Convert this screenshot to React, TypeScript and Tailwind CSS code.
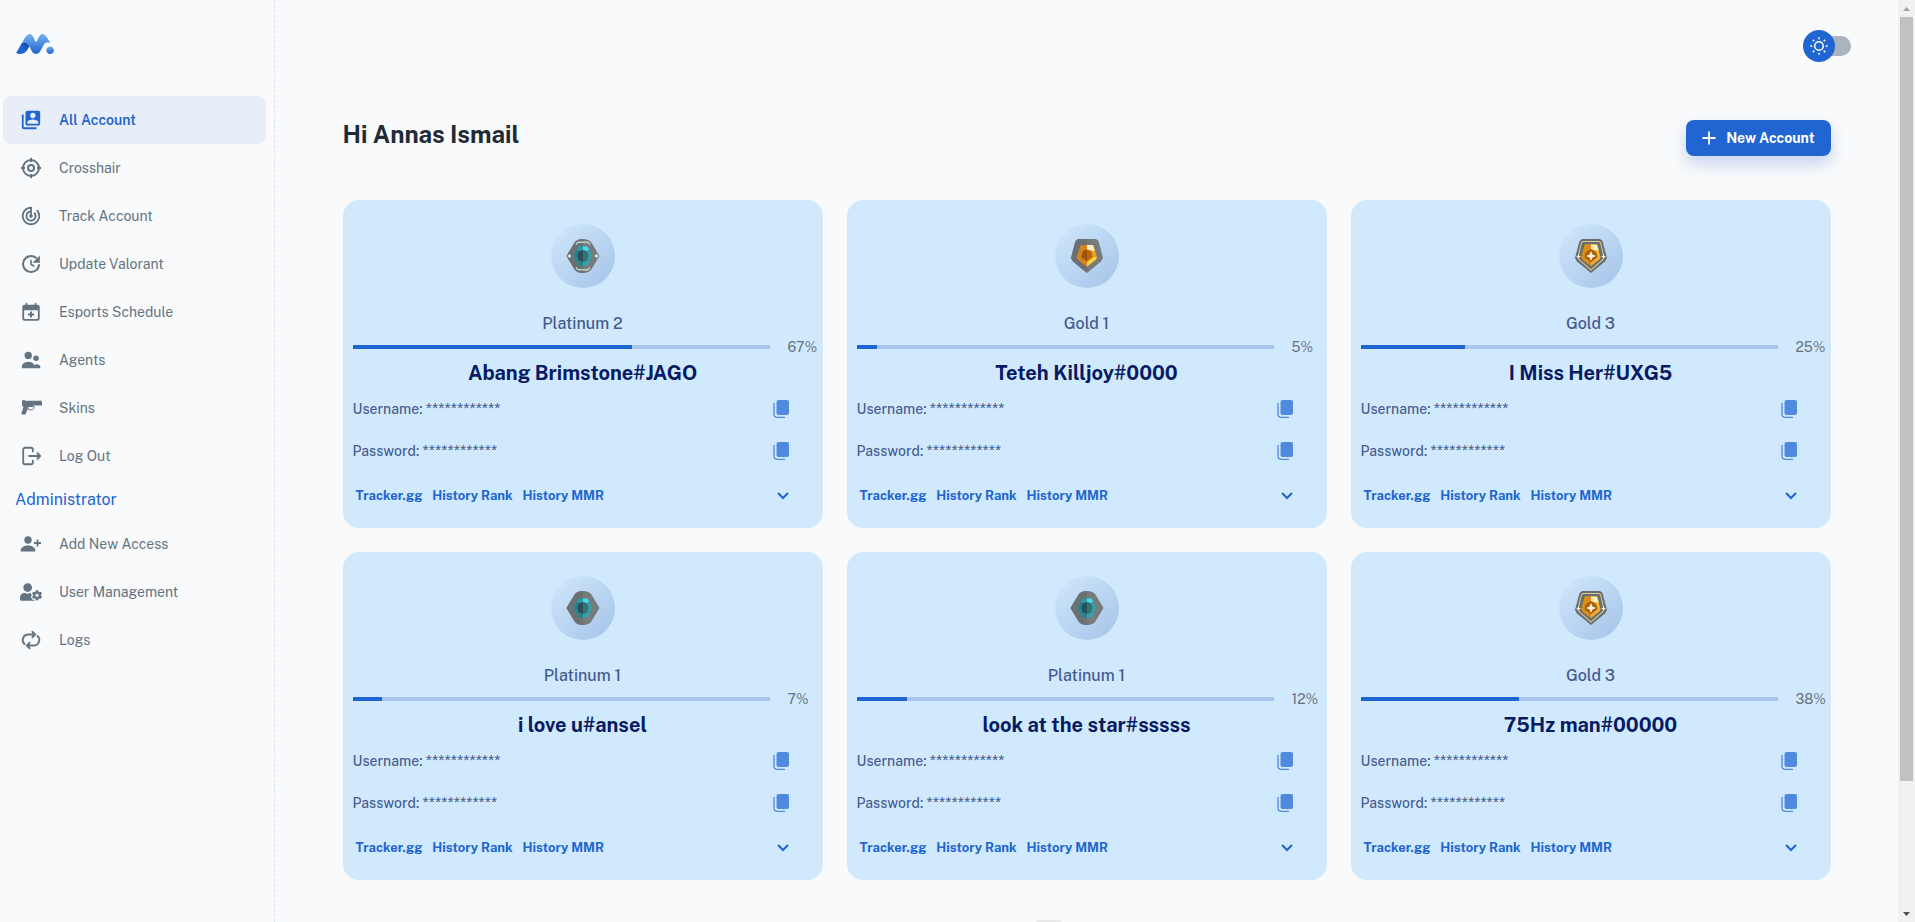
import type { ReactNode } from 'react';
import { MdSwitchAccount, MdTrackChanges } from 'react-icons/md';
import { FaUserCog } from 'react-icons/fa';

type RankKind = 'plat1' | 'plat2' | 'gold1' | 'gold3';

interface Account {
  rank: string;
  kind: RankKind;
  percent: number;
  name: string;
}

const accounts: Account[] = [
  { rank: 'Platinum 2', kind: 'plat2', percent: 67, name: 'Abang Brimstone#JAGO' },
  { rank: 'Gold 1', kind: 'gold1', percent: 5, name: 'Teteh Killjoy#0000' },
  { rank: 'Gold 3', kind: 'gold3', percent: 25, name: 'I Miss Her#UXG5' },
  { rank: 'Platinum 1', kind: 'plat1', percent: 7, name: 'i love u#ansel' },
  { rank: 'Platinum 1', kind: 'plat1', percent: 12, name: 'look at the star#sssss' },
  { rank: 'Gold 3', kind: 'gold3', percent: 38, name: '75Hz man#00000' },
];

function Logo() {
  return (
    <svg viewBox="0 0 512 512" className="size-10" aria-hidden="true">
      <defs>
        <linearGradient id="lg1" x1="100%" x2="50%" y1="9.946%" y2="50%">
          <stop offset="0%" stopColor="#103996" />
          <stop offset="100%" stopColor="#2065D1" />
        </linearGradient>
        <linearGradient id="lg2" x1="50%" x2="50%" y1="0%" y2="100%">
          <stop offset="0%" stopColor="#76B0F1" />
          <stop offset="100%" stopColor="#2065D1" />
        </linearGradient>
      </defs>
      <path
        fill="url(#lg1)"
        d="M183.168 285.573l-2.918 5.298-2.973 5.363-2.846 5.095-2.274 4.043-2.186 3.857-2.506 4.383-1.6 2.774-2.294 3.939-1.099 1.869-1.416 2.388-1.025 1.713-1.317 2.18-.95 1.558-1.514 2.447-.866 1.38-.833 1.312-.802 1.246-.77 1.18-.739 1.111-.935 1.38-.664.956-.425.6-.41.572-.59.8-.376.497-.537.69-.171.214c-10.76 13.37-22.496 23.493-36.93 29.334-30.346 14.262-68.07 14.929-97.202-2.704l72.347-124.682 2.8-1.72c49.257-29.326 73.08 1.117 94.02 40.927z"
      />
      <path
        fill="url(#lg2)"
        d="M444.31 229.726c-46.27-80.956-94.1-157.228-149.043-45.344-7.516 14.384-12.995 42.337-25.267 42.337v-.142c-12.272 0-17.75-27.953-25.265-42.337C189.79 72.356 141.96 148.628 95.69 229.584c-3.483 6.106-6.828 11.932-9.69 16.996 106.038-67.127 97.11 135.667 184 137.278V384c86.891-1.611 77.962-204.405 184-137.28-2.86-5.062-6.206-10.888-9.69-16.994"
      />
      <path fill="url(#lg2)" d="M450 384c26.509 0 48-21.491 48-48s-21.491-48-48-48-48 21.491-48 48 21.491 48 48 48" />
    </svg>
  );
}

function CrosshairIcon() {
  return (
    <svg viewBox="0 0 24 24" className="size-6" fill="none" stroke="currentColor" strokeWidth="2" aria-hidden="true">
      <circle cx="12" cy="12" r="8" />
      <circle cx="12" cy="12" r="3" />
      <path d="M12 2v4M12 18v4M2 12h4M18 12h4" />
    </svg>
  );
}

function UpdateIcon() {
  return (
    <svg viewBox="0 0 24 24" className="size-6" fill="none" stroke="currentColor" strokeWidth="2" strokeLinecap="round" aria-hidden="true">
      <path d="M20 13a8 8 0 1 1-3-7.300" />
      <path d="M20.800 3.500v7.300h-7.300z" fill="currentColor" stroke="none" />
      <path d="M12 8.500v3.800l2.800 1.700" strokeWidth="1.600" />
    </svg>
  );
}

function CalendarIcon() {
  return (
    <svg viewBox="0 0 24 24" className="size-[22px]" aria-hidden="true">
      <path
        fill="currentColor"
        fillRule="evenodd"
        d="M19 4h-1V3a1 1 0 0 0-2 0v1H8V3a1 1 0 0 0-2 0v1H5a2.500 2.500 0 0 0-2.500 2.500v12.500A2.500 2.500 0 0 0 5 21.500h14a2.500 2.500 0 0 0 2.500-2.500V6.500A2.500 2.500 0 0 0 19 4zM4.500 10h15v8.500a1 1 0 0 1-1 1h-13a1 1 0 0 1-1-1z"
      />
      <path d="M12 11.500v6.600M8.700 14.800h6.600" fill="none" stroke="currentColor" strokeWidth="2.200" />
    </svg>
  );
}

function AgentsIcon() {
  return (
    <svg viewBox="0 0 24 24" className="size-[22px]" fill="currentColor" aria-hidden="true">
      <circle cx="9" cy="7" r="4" />
      <circle cx="17.500" cy="10" r="3" />
      <path d="M2 21v-1.500a7 5.500 0 0 1 13.600-1.800c.6-.7 1.400-1 2.400-1a4.300 4.300 0 0 1 4.300 4.300z" />
    </svg>
  );
}

function PistolIcon() {
  return (
    <svg viewBox="0 0 24 24" className="size-6" fill="currentColor" aria-hidden="true">
      <path d="M3 5l1-1h1.500l.5.700h15.500V4.500h1V5.500h.5v4h-8.500l-.5 1.500H9.300L6.500 18.500H3L2.300 17.500 4.500 11 3 9.500z" />
      <path d="M8.800 11.500l.7 2.300h4l1.300-1.500V10" fill="none" stroke="currentColor" strokeWidth="1" />
    </svg>
  );
}

function LogOutIcon() {
  return (
    <svg viewBox="0 0 24 24" className="size-[22px]" fill="none" stroke="currentColor" strokeWidth="2" strokeLinecap="round" strokeLinejoin="round" aria-hidden="true">
      <path d="M14 7V5a2 2 0 0 0-2-2H5.500a2 2 0 0 0-2 2v14a2 2 0 0 0 2 2H12a2 2 0 0 0 2-2v-2M10 12h12M19 9l3 3-3 3" />
    </svg>
  );
}

function PersonAddIcon() {
  return (
    <svg viewBox="0 0 24 24" className="size-6" fill="currentColor" aria-hidden="true">
      <circle cx="9" cy="8" r="3.700" />
      <path d="M1.700 19.500v-1.200c0-2.700 3.400-4.800 7.300-4.800s7.300 2.100 7.300 4.800v1.200z" />
      <path d="M18.500 7.500v7M15 11h7" stroke="currentColor" strokeWidth="1.800" />
    </svg>
  );
}

function LogsIcon() {
  return (
    <svg viewBox="0 0 24 24" className="size-[22px]" fill="none" stroke="currentColor" strokeWidth="2" strokeLinecap="round" strokeLinejoin="round" aria-hidden="true">
      <path d="M5 16.500A6 6 0 0 1 8.500 6H16M13.500 3L16.500 6l-3 3M19 7.500A6 6 0 0 1 15.500 18H8M10.500 15l-3 3 3 3" />
    </svg>
  );
}

function CopyIcon() {
  return (
    <svg viewBox="0 0 16 18" className="h-[18px] w-4" aria-hidden="true">
      <rect x="3.500" y="0" width="12.500" height="15" rx="2" fill="currentColor" />
      <path d="M1 3.500v10.500a3.300 3.300 0 0 0 3.300 3.300H11.500" fill="none" stroke="currentColor" strokeWidth="1.300" strokeLinecap="round" />
    </svg>
  );
}

function RankIcon({ kind }: { kind: RankKind }) {
  if (kind === 'plat1' || kind === 'plat2') {
    return (
      <svg viewBox="0 0 34 36" className="h-9 w-[34px]" aria-hidden="true">
        <path d="M17 1C20.500 1 24 2 26 5.500L33.500 18 26 30.500C24 34 20.500 35 17 35S10 34 8 30.500L.5 18 8 5.500C10 2 13.500 1 17 1z" fill="#777b7c" />
        <path d="M17 1v34c-3.500 0-7-1-9-4.500L.5 18 8 5.500C10 2 13.500 1 17 1z" fill="#6b7073" />
        <path d="M12.500 8.500h9L26.500 18l-5 9.500h-9L7.500 18z" fill="#35a0ae" />
        <path d="M17 8.500v19h-4.500L7.500 18l5-9.500z" fill="#2a808d" />
        <path d="M17 8.500h4.500l1.500 3-2.500 1.500-3.500-1z" fill="#4bdce6" />
        <path d="M12.500 8.500H17V12l-3.500 1-2.500-1.500z" fill="#2b9aa7" />
        <path d="M17 12l4 1.500 1.800 4.500-1.800 4.500-4 1.500z" fill="#3a6f74" />
        <path d="M17 12l-4 1.500-1.800 4.500 1.800 4.500 4 1.500z" fill="#28525b" />
        {kind === 'plat2' && (
          <g>
            <path d="M10 6.500L12 4.300h10l2 2.200M10 29.500l2 2.200h10l2-2.200" fill="none" stroke="#b9cfcc" strokeWidth="1.500" />
            <path d="M3.500 15.800l.8 1.500 1.700.7-1.700.7-.8 1.500-.8-1.500L1 18l1.700-.7zM30.500 15.800l.8 1.500 1.700.7-1.700.7-.8 1.500-.8-1.500L28 18l1.700-.7z" fill="#eff1ea" />
          </g>
        )}
      </svg>
    );
  }
  if (kind === 'gold1') {
    return (
      <svg viewBox="0 0 34 36" className="h-9 w-[34px]" aria-hidden="true">
        <path d="M8 1h18l2.500 2L33 20l-2 3.500L17 35 3 23.500 1 20 5.500 3z" fill="#777b7c" />
        <path d="M17 1v34L3 23.500 1 20 5.500 3 8 1z" fill="#6b7073" />
        <path d="M11 7h12l4 12-1 2.500-9 7-9-7L7 19z" fill="#e9a11e" />
        <path d="M17 7v21.500l-9-7L7 19l4-12z" fill="#d98416" />
        <path d="M17 7h6l2 6-4-.5-4-1z" fill="#fbeec2" />
        <path d="M27 19l-1 2.500-9 7V24l6-5z" fill="#fbce3b" />
        <path d="M17 11.500l4 1.500 2 6-6 4.500z" fill="#b9690c" />
        <path d="M17 11.500v12L11 19l2-6z" fill="#9b560d" />
      </svg>
    );
  }
  return (
    <svg viewBox="0 0 34 36" className="h-9 w-[34px]" aria-hidden="true">
      <path d="M8 1h18l2.500 2L33 20l-2 3.500L17 35 3 23.500 1 20 5.500 3z" fill="#686d70" />
      <path d="M9 3.500h16l1.500 1 3.500 15-1.500 2.500L17 32 5.500 22 4 19.500l3.500-15z" fill="none" stroke="#dcc68c" strokeWidth="1.100" />
      <path d="M11 6.500h12L26.500 19l-1 2.500-8.500 6.500-8.500-6.500L7.500 19z" fill="#efb033" />
      <path d="M17 6.500V28l-8.500-6.500-1-2.500L11 6.500z" fill="#e08a17" />
      <path d="M17 6.500h6L25 13l-4-1-4-1z" fill="#f9ecb6" />
      <path d="M17 11l5 3 1.500 5L17 24.500 10.500 19l1.500-5z" fill="#a8600f" />
      <path d="M17 13l1.500 3.500L22 18l-3.500 1.500L17 23l-1.500-3.500L12 18l3.500-1.500z" fill="#fff2d6" />
      <path d="M4.500 16l.7 1.800 1.800.7-1.800.7-.7 1.800-.7-1.800-1.800-.7 1.800-.7zM29.500 16l.7 1.800 1.800.7-1.800.7-.7 1.800-.7-1.800-1.800-.7 1.800-.7z" fill="#fff5df" />
    </svg>
  );
}

function NavItem({ icon, label, active = false }: { icon: ReactNode; label: string; active?: boolean }) {
  return (
    <li>
      <a
        href="#"
        aria-current={active ? 'page' : undefined}
        className={
          active
            ? 'flex h-12 items-center gap-4 rounded-lg bg-[#e7eef8] pl-4 text-sm font-semibold text-[#2065d1]'
            : 'flex h-12 items-center gap-4 rounded-lg pl-4 text-sm text-[#637381]'
        }
      >
        <span className="flex size-6 items-center justify-center">{icon}</span>
        {label}
      </a>
    </li>
  );
}

function Sidebar() {
  return (
    <aside className="w-[275px] shrink-0 border-r border-dashed border-[#dde1e5]">
      <div className="px-[15px] pt-6 pb-8">
        <a href="#" aria-label="Home" className="inline-block align-top">
          <Logo />
        </a>
      </div>
      <nav className="pr-2 pl-[3px]">
        <ul>
          <NavItem active icon={<MdSwitchAccount size={22} />} label="All Account" />
          <NavItem icon={<CrosshairIcon />} label="Crosshair" />
          <NavItem icon={<MdTrackChanges size={22} />} label="Track Account" />
          <NavItem icon={<UpdateIcon />} label="Update Valorant" />
          <NavItem icon={<CalendarIcon />} label="Esports Schedule" />
          <NavItem icon={<AgentsIcon />} label="Agents" />
          <NavItem icon={<PistolIcon />} label="Skins" />
          <NavItem icon={<LogOutIcon />} label="Log Out" />
        </ul>
        <h2 className="flex h-10 items-center pl-3 text-base text-[#2065d1]">Administrator</h2>
        <ul>
          <NavItem icon={<PersonAddIcon />} label="Add New Access" />
          <NavItem icon={<FaUserCog size={22} />} label="User Management" />
          <NavItem icon={<LogsIcon />} label="Logs" />
        </ul>
      </nav>
    </aside>
  );
}

function CredentialRow({ label }: { label: string }) {
  return (
    <div className="flex h-[42px] items-center justify-between pr-[34px] pl-[10px]">
      <p className="text-sm font-medium text-[#061b64]/70">
        {label}: <span className="text-[15px] leading-5">************</span>
      </p>
      <button type="button" aria-label={`Copy ${label.toLowerCase()}`} className="text-[#5189dc]">
        <CopyIcon />
      </button>
    </div>
  );
}

function AccountCard({ account }: { account: Account }) {
  return (
    <article className="rounded-2xl bg-[#d1e9fc] pt-6 pb-2 text-[#061b64]">
      <div className="mx-auto flex size-16 items-center justify-center rounded-full bg-linear-135 from-[#2065d1]/0 to-[#1c4fb0]/25">
        <RankIcon kind={account.kind} />
      </div>
      <p className="mt-[22px] text-center text-base leading-7 font-medium opacity-70">{account.rank}</p>
      <div className="flex h-[18px] items-center gap-[18px] pl-[10px]">
        <div
          role="progressbar"
          aria-label={account.rank}
          aria-valuenow={account.percent}
          className="h-1 flex-1 bg-[#a9c3ed]"
        >
          <div className="h-full bg-[#2065d1]" style={{ width: `${account.percent}%` }} />
        </div>
        <span className="w-[35px] text-sm text-[#637381]">{account.percent}%</span>
      </div>
      <h3 className="pt-[2px] text-center text-xl leading-[30px] font-bold">{account.name}</h3>
      <CredentialRow label="Username" />
      <CredentialRow label="Password" />
      <div className="flex h-12 items-center gap-[10px] pr-[34px] pl-[13px] text-[13px] font-bold text-[#2065d1]">
        <a href="#">Tracker.gg</a>
        <a href="#">History Rank</a>
        <a href="#">History MMR</a>
        <button type="button" aria-label="Show more" className="ml-auto">
          <svg viewBox="0 0 12 8" className="h-2 w-3" fill="none" stroke="currentColor" strokeWidth="2" aria-hidden="true">
            <path d="M1 1l5 5 5-5" />
          </svg>
        </button>
      </div>
    </article>
  );
}

function ThemeSwitch() {
  return (
    <button type="button" role="switch" aria-checked="false" aria-label="Dark mode" className="relative flex h-8 w-12 items-center">
      <span className="ml-auto h-5 w-10 rounded-full bg-[#aab4be]" />
      <span className="absolute top-0 left-0 flex size-8 items-center justify-center rounded-full bg-[#2065d1] text-white">
        <svg viewBox="0 0 20 20" className="size-5" fill="none" stroke="currentColor" strokeWidth="1.500" aria-hidden="true">
          <circle cx="10" cy="10" r="4.300" />
          <path d="M10 1.300v2M10 16.700v2M1.300 10h2M16.700 10h2M3.850 3.850l1.400 1.400M14.750 14.750l1.400 1.400M3.850 16.150l1.400-1.400M14.750 5.250l1.400-1.400" />
        </svg>
      </span>
    </button>
  );
}

function Pagination() {
  return (
    <nav aria-label="Pages" className="mt-10 flex justify-center gap-[6px]">
      <button type="button" aria-label="Previous page" className="size-8 rounded-lg" />
      <button type="button" aria-label="Page 1" aria-current="page" className="size-8 rounded-lg bg-[#e6e8ea]" />
      <button type="button" aria-label="Page 2" className="size-8 rounded-lg" />
      <button type="button" aria-label="Page 3" className="size-8 rounded-lg" />
      <button type="button" aria-label="Next page" className="size-8 rounded-lg" />
    </nav>
  );
}

function Scrollbar() {
  return (
    <div className="flex w-[17px] shrink-0 flex-col items-center bg-[#f1f1f1]" aria-hidden="true">
      <div className="flex h-[17px] items-center justify-center">
        <svg viewBox="0 0 7 4" className="h-1 w-[7px]" fill="#a3a3a3"><path d="M0 4L3.500 0 7 4z" /></svg>
      </div>
      <div className="w-[13px] flex-1">
        <div className="h-[86%] bg-[#c1c1c1]" />
      </div>
      <div className="flex h-[17px] items-center justify-center">
        <svg viewBox="0 0 7 4" className="h-1 w-[7px]" fill="#505050"><path d="M0 0l3.500 4L7 0z" /></svg>
      </div>
    </div>
  );
}

export default function App() {
  return (
    <div className="flex h-screen overflow-hidden bg-[#f9fafb] font-['Public_Sans','Inter',sans-serif]">
      <Sidebar />
      <main className="min-w-0 flex-1 overflow-hidden">
        <header className="flex h-[92px] items-center justify-end pr-[47px]">
          <ThemeSwitch />
        </header>
        <div className="mx-auto max-w-[1536px] px-6 pt-7">
          <div className="mb-11 flex items-start justify-between">
            <h1 className="text-2xl leading-7 font-bold text-[#212b36]">Hi Annas Ismail</h1>
            <button
              type="button"
              className="flex h-9 items-center gap-[10px] rounded-lg bg-[#2065d1] px-4 text-sm font-bold text-white shadow-[0_8px_16px_0_rgba(32,101,209,0.24)]"
            >
              <svg viewBox="0 0 14 14" className="size-[14px]" fill="none" stroke="currentColor" strokeWidth="1.800" aria-hidden="true">
                <path d="M7 0.500v13M0.500 7h13" />
              </svg>
              New Account
            </button>
          </div>
          <div className="grid grid-cols-3 gap-6">
            {accounts.map((account) => (
              <AccountCard key={account.name} account={account} />
            ))}
          </div>
          <Pagination />
        </div>
      </main>
      <Scrollbar />
    </div>
  );
}
